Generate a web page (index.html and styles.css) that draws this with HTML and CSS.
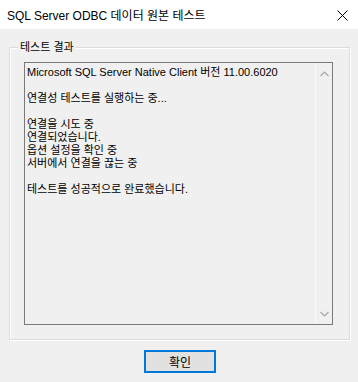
FILE: index.html
```html
<!DOCTYPE html>
<html lang="ko">
<head>
  <meta charset="UTF-8">
  <title>SQL Server ODBC 데이터 원본 테스트</title>
  <link rel="stylesheet" href="styles.css">
</head>
<body>
  <div class="window">
    <div class="titlebar">
      <span class="title">SQL Server ODBC 데이터 원본 테스트</span>
      <svg class="close" width="11" height="11" viewBox="0 0 11 11">
        <path d="M0.5 0.5 L10.5 10.5 M10.5 0.5 L0.5 10.5" stroke="#000" stroke-width="1" fill="none"/>
      </svg>
    </div>

    <div class="content">
      <div class="group">
        <span class="group-label">테스트 결과</span>
        <div class="result-box">
          <div class="result-text">
            <p>Microsoft SQL Server Native Client 버전 11.00.6020</p>
            <p class="blank"></p>
            <p>연결성 테스트를 실행하는 중...</p>
            <p class="blank"></p>
            <p>연결을 시도 중</p>
            <p>연결되었습니다.</p>
            <p>옵션 설정을 확인 중</p>
            <p>서버에서 연결을 끊는 중</p>
            <p class="blank"></p>
            <p>테스트를 성공적으로 완료했습니다.</p>
          </div>
          <div class="scrollbar">
            <svg width="9" height="6" viewBox="0 0 9 6">
              <path d="M0.5 5 L4.5 1 L8.5 5" stroke="#a6a6a6" stroke-width="1.2" fill="none"/>
            </svg>
            <svg width="9" height="6" viewBox="0 0 9 6">
              <path d="M0.5 1 L4.5 5 L8.5 1" stroke="#a6a6a6" stroke-width="1.2" fill="none"/>
            </svg>
          </div>
        </div>
      </div>

      <div class="actions">
        <button class="ok-btn">확인</button>
      </div>
    </div>
  </div>
</body>
</html>
```

FILE: styles.css
```css
/* Reset */
* {
  margin: 0;
  padding: 0;
  box-sizing: border-box;
}

body {
  width: 358px;
  height: 382px;
  font-family: "Liberation Sans", "Noto Sans CJK KR", sans-serif;
  font-size: 11px;
  color: #000;
  background: #f0f0f0;
  overflow: hidden;
}

/* Window */
.window {
  width: 358px;
  height: 382px;
  background: #f0f0f0;
}

.titlebar {
  height: 29px;
  background: #fff;
  display: flex;
  align-items: center;
  justify-content: space-between;
  padding: 0 10px 0 7px;
}

.title {
  font-size: 12px;
}

.close {
  margin-top: 1px;
}

.content {
  padding: 18px 8px 0 9px;
}

/* Group box */
.group {
  position: relative;
  height: 293px;
  border: 1px solid #dcdcdc;
  box-shadow: inset 1px 1px 0 #fff, 1px 1px 0 #fff;
  padding: 14px 16px 0 14px;
}

.group-label {
  position: absolute;
  top: -8px;
  left: 8px;
  padding: 0 2px;
  line-height: 14px;
  background: #f0f0f0;
}

/* Read-only result box */
.result-box {
  height: 263px;
  border: 1px solid #7a7a7a;
  display: flex;
}

.result-text {
  flex: 1;
  padding: 3px 2px;
}

.result-text p {
  line-height: 13px;
  height: 13px;
  white-space: nowrap;
}

.scrollbar {
  width: 17px;
  border-left: 1px solid #fafafa;
  display: flex;
  flex-direction: column;
  justify-content: space-between;
  align-items: center;
  padding: 8px 0 7px;
}

/* Button */
.actions {
  display: flex;
  justify-content: center;
  padding-top: 10px;
}

.ok-btn {
  width: 72px;
  height: 23px;
  border: 2px solid #0078d7;
  background: #e1e1e1;
  font-family: inherit;
  font-size: 12px;
  color: #000;
  margin-left: 1px;
}
```
